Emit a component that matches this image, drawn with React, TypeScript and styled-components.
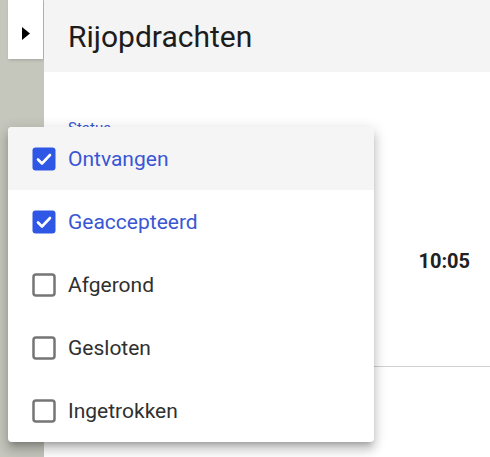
import React, { useState } from "react";
import styled, { createGlobalStyle } from "styled-components";

const GlobalStyle = createGlobalStyle`
  html, body {
    margin: 0;
    padding: 0;
    background: #ffffff;
  }

  body {
    font-family: Roboto, "Liberation Sans", Arial, sans-serif;
    color: #212121;
  }
`;

const Page = styled.div`
  position: relative;
  display: flex;
  height: 100vh;
  overflow: hidden;
`;

const Sidebar = styled.div`
  width: 44px;
  flex-shrink: 0;
  background: #c5c7bd;
`;

const ToggleButton = styled.button`
  display: flex;
  align-items: center;
  justify-content: center;
  margin-left: 8px;
  width: 35px;
  height: 59px;
  padding: 8px 0 0;
  border: none;
  background: #ffffff;
  box-shadow: 1px 1px 3px rgba(0, 0, 0, 0.18);
  cursor: pointer;
`;

const Main = styled.div`
  flex: 1;
  display: flex;
  flex-direction: column;
`;

const Header = styled.header`
  display: flex;
  align-items: center;
  height: 72px;
  padding-left: 24px;
  background: #f4f4f4;

  h1 {
    margin: 0;
    font-size: 30px;
    font-weight: 400;
    color: #1c1c1c;
  }
`;

const Content = styled.div`
  padding: 47px 20px 0 24px;
`;

const StatusLabel = styled.label`
  display: block;
  font-size: 15px;
  line-height: 18px;
  color: #3a56d4;
`;

const Row = styled.div`
  display: flex;
  justify-content: flex-end;
  align-items: flex-start;
  height: 230px;
  padding-top: 112px;
  box-sizing: border-box;
  margin-right: -20px;
  padding-right: 20px;
  border-bottom: 1px solid #d2d2d2;
`;

const Time = styled.span`
  font-size: 20px;
  line-height: 24px;
  font-weight: 700;
  color: #212121;
`;

const Menu = styled.ul`
  position: absolute;
  left: 8px;
  top: 127px;
  width: 366px;
  margin: 0;
  padding: 0;
  list-style: none;
  background: #ffffff;
  border-radius: 4px;
  box-shadow: 0 5px 5px -3px rgba(0, 0, 0, 0.2),
    0 8px 10px 1px rgba(0, 0, 0, 0.14), 0 3px 14px 2px rgba(0, 0, 0, 0.12);
  overflow: hidden;
  z-index: 10;
`;

const MenuItem = styled.li<{ $active?: boolean; $checked?: boolean }>`
  display: flex;
  align-items: center;
  gap: 12px;
  height: 63px;
  padding-left: 24px;
  font-size: 21px;
  color: ${(p) => (p.$checked ? "#3a56d4" : "#303030")};
  background: ${(p) => (p.$active ? "#f5f5f5" : "transparent")};
  cursor: pointer;
`;

const Checkbox = ({ checked }: { checked: boolean }) =>
  checked ? (
    <svg width="24" height="24" viewBox="0 0 24 24">
      <rect x="0.5" y="0.5" width="23" height="23" rx="3" fill="#2e57e6" />
      <path
        d="M6 12.5l4 4 8-8.5"
        fill="none"
        stroke="#ffffff"
        strokeWidth="2.6"
        strokeLinecap="round"
        strokeLinejoin="round"
      />
    </svg>
  ) : (
    <svg width="24" height="24" viewBox="0 0 24 24">
      <rect
        x="1.5"
        y="1.5"
        width="21"
        height="21"
        rx="2.5"
        fill="none"
        stroke="#757575"
        strokeWidth="2.5"
      />
    </svg>
  );

const statuses = [
  { label: "Ontvangen", checked: true },
  { label: "Geaccepteerd", checked: true },
  { label: "Afgerond", checked: false },
  { label: "Gesloten", checked: false },
  { label: "Ingetrokken", checked: false },
];

const App = () => {
  const [items, setItems] = useState(statuses);

  const toggle = (i: number) => {
    setItems(items.map((s, j) => (j === i ? { ...s, checked: !s.checked } : s)));
  };

  return (
    <Page>
      <GlobalStyle />
      <Sidebar>
        <ToggleButton>
          <svg width="8" height="13" viewBox="0 0 8 13">
            <polygon points="0,0 8,6.5 0,13" fill="#000000" />
          </svg>
        </ToggleButton>
      </Sidebar>

      <Main>
        <Header>
          <h1>Rijopdrachten</h1>
        </Header>

        <Content>
          <StatusLabel>Status</StatusLabel>
          <Row>
            <Time>10:05</Time>
          </Row>
        </Content>
      </Main>

      <Menu>
        {items.map((s, i) => (
          <MenuItem
            key={s.label}
            $active={i === 0}
            $checked={s.checked}
            onClick={() => toggle(i)}
          >
            <Checkbox checked={s.checked} />
            {s.label}
          </MenuItem>
        ))}
      </Menu>
    </Page>
  );
};

export default App;
